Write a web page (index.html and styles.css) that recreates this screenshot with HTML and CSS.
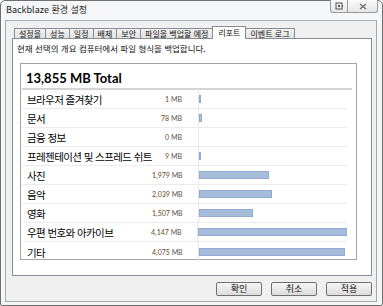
FILE: index.html
```html
<!DOCTYPE html>
<html lang="ko">
    <head>
        <meta charset="utf-8">
        <title>Backblaze 환경 설정</title>
        <link rel="stylesheet" href="styles.css">
    </head>
    <body>
        <div class="window"> <!-- whole dialog window -->
            <div class="titlebar">
                <span class="title">Backblaze 환경 설정</span>
                <div class="caption">
                    <span class="cap-btn cap-help">
                        <svg width="9" height="8" viewBox="0 0 9 8"><rect x="1" y="1" width="6" height="6" fill="none" stroke="#555"/><rect x="3" y="3" width="2" height="2" fill="#555"/><path d="M7 3 L8.5 4 L7 5" fill="#555"/></svg>
                    </span>
                    <span class="cap-btn cap-close">
                        <svg width="8" height="7" viewBox="0 0 8 7"><path d="M1 1 L7 6 M7 1 L1 6" stroke="#666" stroke-width="1.2"/></svg>
                    </span>
                </div>
            </div>
            <div class="client">
                <div class="tabs">
                    <span class="tab">설정을</span>
                    <span class="tab">성능</span>
                    <span class="tab">일정</span>
                    <span class="tab">배제</span>
                    <span class="tab">보안</span>
                    <span class="tab">파일을 백업할 예정</span>
                    <span class="tab active">리포트</span>
                    <span class="tab">이벤트 로그</span>
                </div>
                <div class="panel">
                    <p class="desc">현재 선택의 개요 컴퓨터에서 파일 형식을 백업합니다.</p>
                    <div class="report">
                        <div class="total">13,855 MB Total</div>
                        <div class="rows">
                            <div class="row"><span class="label">브라우저 즐겨찾기</span><span class="size">1 <em>MB</em></span><span class="bar-cell"><i class="bar" style="width:1px"></i></span></div>
                            <div class="row"><span class="label">문서</span><span class="size">78 <em>MB</em></span><span class="bar-cell"><i class="bar" style="width:3px"></i></span></div>
                            <div class="row"><span class="label">금융 정보</span><span class="size">0 <em>MB</em></span><span class="bar-cell"></span></div>
                            <div class="row"><span class="label">프레젠테이션 및 스프레드 쉬트</span><span class="size">9 <em>MB</em></span><span class="bar-cell"><i class="bar" style="width:1px"></i></span></div>
                            <div class="row"><span class="label">사진</span><span class="size">1,979 <em>MB</em></span><span class="bar-cell"><i class="bar" style="width:70px"></i></span></div>
                            <div class="row"><span class="label">음악</span><span class="size">2,039 <em>MB</em></span><span class="bar-cell"><i class="bar" style="width:73px"></i></span></div>
                            <div class="row"><span class="label">영화</span><span class="size">1,507 <em>MB</em></span><span class="bar-cell"><i class="bar" style="width:54px"></i></span></div>
                            <div class="row"><span class="label">우편 번호와 아카이브</span><span class="size">4,147 <em>MB</em></span><span class="bar-cell"><i class="bar" style="width:149px"></i></span></div>
                            <div class="row"><span class="label">기타</span><span class="size">4,075 <em>MB</em></span><span class="bar-cell"><i class="bar" style="width:146px"></i></span></div>
                        </div>
                    </div>
                </div>
                <div class="buttons">
                    <button type="button">확인</button>
                    <button type="button">취소</button>
                    <button type="button">적용</button>
                </div>
            </div>
        </div>
    </body>
</html>
```
FILE: styles.css
```css
*{
    margin: 0;
    padding: 0;
    box-sizing: border-box;
}
body{
    background: #ffffff;
    font-family: "Noto Sans CJK KR", "Liberation Sans", sans-serif;
    color: #000;
}
.window{
    width: 383px;
    height: 306px;
    border: 1px solid #6f6f6f;
    border-radius: 5px 5px 2px 2px;
    background: #f4f6f8;
    padding: 0 5px 3px 4px;
    display: flex;
    flex-direction: column;
}
.titlebar{
    height: 19px;
    display: flex;
    justify-content: space-between;
}
.title{
    font-size: 9px;
    line-height: 18px;
    color: #222;
    padding-left: 1px;
}
.caption{
    display: flex;
    margin-top: -1px;
    margin-right: -1px;
}
.cap-btn{
    height: 13px;
    border: 1px solid #9a9a9a;
    border-top: none;
    background: linear-gradient(#fafafa, #e6e6e6);
    display: flex;
    align-items: center;
    justify-content: center;
}
.cap-help{
    width: 18px;
    border-radius: 0 0 0 3px;
}
.cap-close{
    width: 30px;
    border-left: none;
    border-radius: 0 0 3px 0;
}
.client{
    flex: 1;
    border: 1px solid #a9a9a9;
    background: #f0f0f0;
    padding: 5px 4px 0 6px;
    display: flex;
    flex-direction: column;
}
.tabs{
    display: flex;
    align-items: flex-end;
    height: 12px;
    padding-left: 2px;
    position: relative;
    z-index: 1;
}
.tab{
    font-size: 8px;
    line-height: 8px;
    height: 10px;
    padding: 1px 4px 0;
    border: 1px solid #898c95;
    border-bottom: none;
    margin-right: -1px;
    background: linear-gradient(#f2f2f2, #e3e3e3);
    color: #111;
    white-space: nowrap;
}
.tab.active{
    height: 13px;
    margin-bottom: -1px;
    padding: 2px 5px 0;
    background: #fff;
    position: relative;
}
.panel{
    height: 238px;
    border: 1px solid #898c95;
    background: #fff;
    padding: 3px 14px 0 7px;
}
.desc{
    font-size: 8.5px;
    line-height: 12px;
    margin-left: -3px;
    color: #111;
}
.report{
    margin-top: 9px;
    height: 197px;
    border: 1px solid #a3a3a3;
    padding-left: 1px;
}
.total{
    height: 26px;
    font-family: "Lato", "Liberation Sans", sans-serif;
    font-weight: bold;
    font-size: 13px;
    line-height: 28px;
    padding-left: 4px;
    border-bottom: 2px solid #d4d4d4;
    margin-right: 4px;
}
.rows{
    display: flex;
    flex-direction: column;
}
.row{
    height: 19px;
    display: flex;
    align-items: center;
    border-bottom: 1px solid #ececec;
    margin-right: 9px;
}
.row:last-child{
    border-bottom: none;
}
.label{
    width: 130px;
    padding-left: 5px;
    padding-top: 1px;
    font-size: 10.5px;
    letter-spacing: -0.6px;
    white-space: nowrap;
    color: #000;
}
.size{
    width: 30px;
    text-align: right;
    font-family: "Lato", "Liberation Sans", sans-serif;
    font-size: 7px;
    color: #6a4a2a;
    white-space: nowrap;
}
.size em{
    font-style: normal;
    color: #555;
}
.bar-cell{
    margin-left: 16px;
    height: 19px;
    flex: 1;
    border-left: 1px solid #e6e6e6;
    display: flex;
    align-items: center;
}
.bar{
    display: block;
    height: 8px;
    background: #a6bcdb;
    border: 1px solid #93abd2;
}
.buttons{
    display: flex;
    justify-content: flex-end;
    gap: 9px;
    padding: 6px 0 0;
}
button{
    width: 46px;
    height: 14px;
    font-family: "Noto Sans CJK KR", sans-serif;
    font-size: 9px;
    line-height: 10px;
    border: 1px solid #707070;
    border-radius: 2px;
    background: linear-gradient(#f6f6f6, #dcdcdc);
    color: #111;
}
```
